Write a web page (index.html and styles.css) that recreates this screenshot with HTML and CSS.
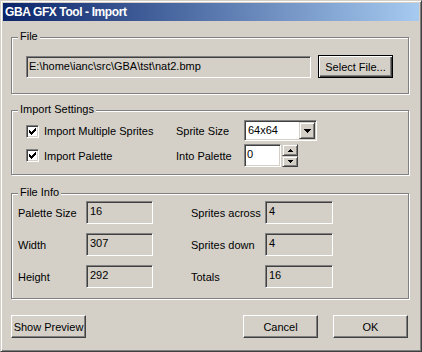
FILE: index.html
```html
<!DOCTYPE html>
<html lang="en">
<head>
    <meta charset="UTF-8">
    <meta name="viewport" content="width=device-width, initial-scale=1.0">
    <title>GBA GFX Tool - Import</title>
    <link rel="stylesheet" href="styles.css">
</head>
<body>
    <div class="window">
        <div class="titlebar">GBA GFX Tool - Import</div>
        <div class="dialog">
            <div class="group group-file">
                <span class="group-title">File</span>
                <div class="file-row">
                    <div class="field field-grey field-path">E:\home\ianc\src\GBA\tst\nat2.bmp</div>
                    <button class="btn btn-default">Select File...</button>
                </div>
            </div>

            <div class="group group-settings">
                <span class="group-title">Import Settings</span>
                <div class="settings">
                    <div class="settings-row row-combo">
                        <label class="check">
                            <span class="checkbox">
                                <svg width="7" height="7" viewBox="0 0 7 7" shape-rendering="crispEdges"><path d="M0 2H1V3H2V4H3V3H4V2H5V1H6V0H7V3H6V4H5V5H4V6H3V7H2V6H1V5H0Z" fill="#000"/></svg>
                            </span>
                            Import Multiple Sprites
                        </label>
                        <span class="label">Sprite Size</span>
                        <div class="combo">
                            <span class="combo-value">64x64</span>
                            <span class="scroll-btn combo-btn">
                                <svg width="7" height="4" viewBox="0 0 7 4" shape-rendering="crispEdges"><path d="M0 0H7V1H6V2H5V3H4V4H3V3H2V2H1V1H0Z" fill="#000"/></svg>
                            </span>
                        </div>
                    </div>
                    <div class="settings-row row-spin">
                        <label class="check">
                            <span class="checkbox">
                                <svg width="7" height="7" viewBox="0 0 7 7" shape-rendering="crispEdges"><path d="M0 2H1V3H2V4H3V3H4V2H5V1H6V0H7V3H6V4H5V5H4V6H3V7H2V6H1V5H0Z" fill="#000"/></svg>
                            </span>
                            Import Palette
                        </label>
                        <span class="label">Into Palette</span>
                        <div class="spin">
                            <div class="field field-white spin-edit">0</div>
                            <div class="spin-buttons">
                                <span class="scroll-btn spin-up">
                                    <svg width="5" height="3" viewBox="0 0 5 3" shape-rendering="crispEdges"><path d="M2 0H3V1H4V2H5V3H0V2H1V1H2Z" fill="#000"/></svg>
                                </span>
                                <span class="scroll-btn spin-down">
                                    <svg width="5" height="3" viewBox="0 0 5 3" shape-rendering="crispEdges"><path d="M0 0H5V1H4V2H3V3H2V2H1V1H0Z" fill="#000"/></svg>
                                </span>
                            </div>
                        </div>
                    </div>
                </div>
            </div>

            <div class="group group-info">
                <span class="group-title">File Info</span>
                <div class="info-grid">
                    <span class="label">Palette Size</span>
                    <div class="field field-grey info-box">16</div>
                    <span class="label">Sprites across</span>
                    <div class="field field-grey info-box">4</div>

                    <span class="label">Width</span>
                    <div class="field field-grey info-box">307</div>
                    <span class="label">Sprites down</span>
                    <div class="field field-grey info-box">4</div>

                    <span class="label">Height</span>
                    <div class="field field-grey info-box">292</div>
                    <span class="label">Totals</span>
                    <div class="field field-grey info-box">16</div>
                </div>
            </div>

            <div class="actions">
                <button class="btn">Show Preview</button>
                <button class="btn btn-cancel">Cancel</button>
                <button class="btn">OK</button>
            </div>
        </div>
    </div>
</body>
</html>
```

FILE: styles.css
```css
* {
    box-sizing: border-box;
}
body {
    margin: 0;
    background-color: #d4d0c8;
    font-family: "Liberation Sans", Arial, sans-serif;
    font-size: 11px;
    color: #000;
}
.window {
    width: 422px;
    height: 352px;
    padding: 2px;
    background-color: #d4d0c8;
    border: 1px solid;
    border-color: #d4d0c8 #404040 #404040 #d4d0c8;
    box-shadow: inset 1px 1px #fff, inset -1px -1px #808080;
}
.titlebar {
    height: 18px;
    padding-left: 2px;
    background: linear-gradient(to right, #0a246a, #a6caf0);
    color: #fff;
    font-weight: bold;
    font-size: 12px;
    letter-spacing: -0.4px;
    line-height: 18px;
    white-space: nowrap;
}
.dialog {
    padding: 16px 10px 0 8px;
}

/* etched group box */
.group {
    position: relative;
    border: 1px solid #808080;
    box-shadow: inset 1px 1px #fff, 1px 1px #fff;
}
.group-title {
    position: absolute;
    top: -8px;
    left: 6px;
    padding: 0 2px;
    background-color: #d4d0c8;
    line-height: 13px;
}
.group-file {
    height: 57px;
    margin-bottom: 16px;
}
.group-settings {
    height: 65px;
    margin-bottom: 18px;
}
.group-info {
    height: 106px;
}

/* sunken edit fields */
.field {
    border: 1px solid;
    border-color: #808080 #fff #fff #808080;
    box-shadow: inset 1px 1px #404040, inset -1px -1px #d4d0c8;
    padding: 3px 3px;
    line-height: 13px;
    white-space: nowrap;
    overflow: hidden;
}
.field-grey {
    background-color: #d4d0c8;
}
.field-white {
    background-color: #fff;
}

/* push buttons */
.btn {
    width: 75px;
    height: 23px;
    padding: 0;
    font: inherit;
    color: #000;
    background-color: #d4d0c8;
    border: 1px solid;
    border-color: #fff #404040 #404040 #fff;
    box-shadow: inset -1px -1px #808080;
}
.btn-default {
    border-color: #000;
    box-shadow: inset 1px 1px #fff, inset -1px -1px #404040, inset -2px -2px #808080;
}
.scroll-btn {
    display: flex;
    align-items: center;
    justify-content: center;
    background-color: #d4d0c8;
    border: 1px solid;
    border-color: #d4d0c8 #404040 #404040 #d4d0c8;
    box-shadow: inset 1px 1px #fff, inset -1px -1px #808080;
}

/* File */
.file-row {
    display: flex;
    align-items: flex-start;
    gap: 7px;
    padding: 17px 0 0 14px;
}
.field-path {
    width: 285px;
    height: 22px;
    margin-top: 1px;
    padding-left: 2px;
}

/* Import Settings */
.settings {
    display: flex;
    flex-direction: column;
    gap: 3px;
    padding: 9px 0 0 14px;
}
.settings-row {
    display: grid;
    grid-template-columns: 150px 68px auto;
    align-items: center;
}
.row-combo {
    height: 21px;
}
.row-spin {
    height: 23px;
}
.check {
    display: flex;
    align-items: center;
}
.checkbox {
    display: flex;
    align-items: center;
    justify-content: center;
    width: 13px;
    height: 13px;
    margin-right: 5px;
    background-color: #fff;
    border: 1px solid;
    border-color: #808080 #fff #fff #808080;
    box-shadow: inset 1px 1px #404040, inset -1px -1px #d4d0c8;
}
.row-combo .checkbox {
    margin-top: 2px;
}
.combo {
    display: flex;
    width: 73px;
    height: 21px;
    padding: 1px;
    background-color: #fff;
    border: 1px solid;
    border-color: #808080 #fff #fff #808080;
    box-shadow: inset 1px 1px #404040, inset -1px -1px #d4d0c8;
}
.combo-value {
    flex: 1;
    padding-left: 2px;
    line-height: 17px;
}
.combo-btn {
    width: 16px;
    height: 17px;
}
.spin {
    display: flex;
    gap: 1px;
}
.spin-edit {
    width: 37px;
    height: 23px;
    padding: 3px 2px;
}
.spin-buttons {
    display: flex;
    flex-direction: column;
    width: 16px;
    height: 23px;
}
.spin-up {
    height: 12px;
}
.spin-down {
    height: 11px;
}

/* File Info */
.info-grid {
    display: grid;
    grid-template-columns: 68px 105px 74px 68px;
    grid-auto-rows: 23px;
    row-gap: 9px;
    align-items: center;
    padding: 7px 0 0 6px;
}
.info-box {
    width: 67px;
    height: 23px;
}
.info-grid .info-box:last-child,
.info-grid .info-box:nth-child(4n) {
    width: 68px;
}

.actions {
    display: flex;
    margin-top: 16px;
    margin-right: 1px;
}
.btn-cancel {
    margin-left: auto;
    margin-right: 15px;
}
```
